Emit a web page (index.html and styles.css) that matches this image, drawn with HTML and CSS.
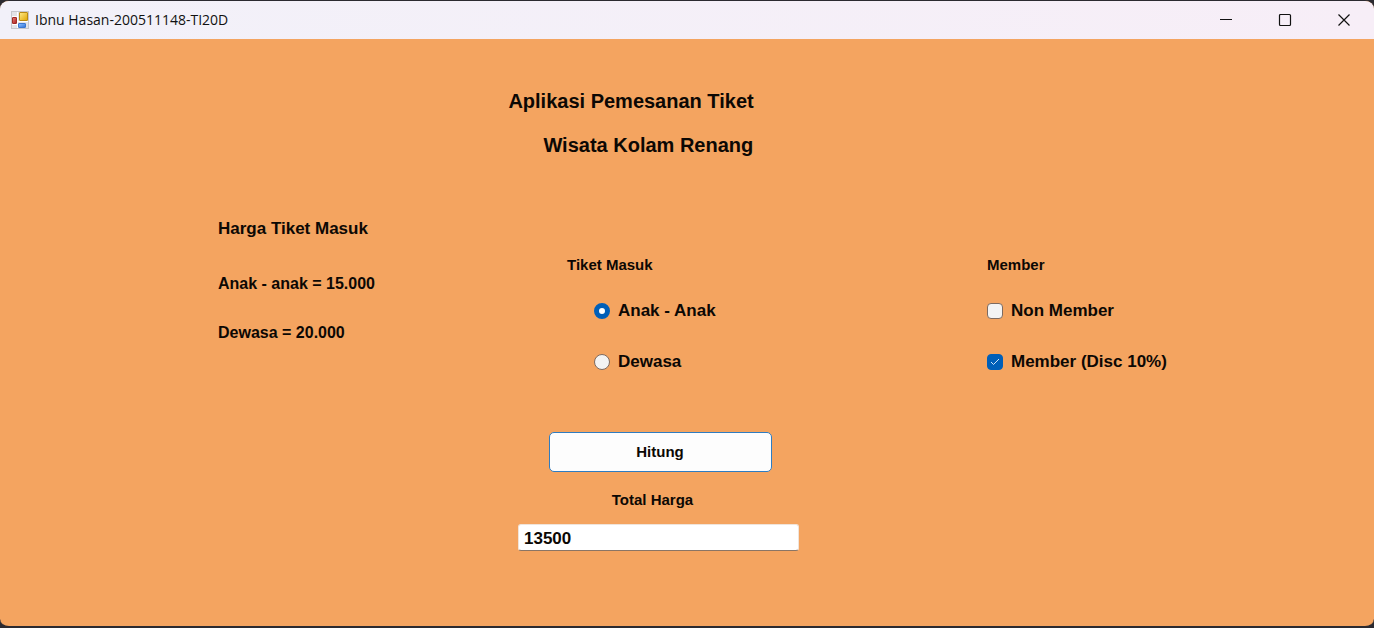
FILE: index.html
```html
<!DOCTYPE html>
<html lang="id">
<head>
<meta charset="utf-8">
<title>Ibnu Hasan-200511148-TI20D</title>
<link rel="stylesheet" href="styles.css">
</head>
<body>
<div class="window">
  <header class="titlebar">
    <svg class="app-icon" viewBox="0 0 18 18" aria-hidden="true">
      <defs>
        <linearGradient id="gold" x2="1" y2="1"><stop offset="0" stop-color="#ffeb8a"/><stop offset="1" stop-color="#e0a500"/></linearGradient>
        <linearGradient id="blue" x2="1" y2="1"><stop offset="0" stop-color="#8fc3ff"/><stop offset="1" stop-color="#2f6fd8"/></linearGradient>
        <linearGradient id="red" x2="1" y2="1"><stop offset="0" stop-color="#e8837a"/><stop offset="1" stop-color="#a81c1c"/></linearGradient>
      </defs>
      <rect x=".5" y=".5" width="17" height="17" fill="#e3e3e6" stroke="#c6c6cc"/>
      <path d="M6.500 1v16M1 5.500h6M1 13.500h6M7 10.500h10" stroke="#fff" fill="none"/>
      <rect x="8.500" y="1.500" width="8" height="8" rx=".4" fill="url(#gold)" stroke="#b98a12"/>
      <rect x="1.500" y="6.500" width="4" height="6" rx=".4" fill="url(#red)" stroke="#a32a25"/>
      <rect x="7.500" y="12.500" width="7" height="4" rx=".4" fill="url(#blue)" stroke="#3c78cf"/>
    </svg>
    <span class="caption">Ibnu Hasan-200511148-TI20D</span>
    <button class="caption-button" type="button" aria-label="Minimize">
      <svg viewBox="0 0 14 14"><path d="M1 6.500h12"/></svg>
    </button>
    <button class="caption-button" type="button" aria-label="Maximize">
      <svg viewBox="0 0 14 14"><rect x="1.500" y="1.500" width="11" height="11" rx="1"/></svg>
    </button>
    <button class="caption-button" type="button" aria-label="Close">
      <svg viewBox="0 0 14 14"><path d="M1.500 1.500l11 11M12.500 1.500l-11 11"/></svg>
    </button>
  </header>
  <main class="form">
    <h1 class="heading">
      <span>Aplikasi Pemesanan Tiket</span>
      <span class="heading-second">Wisata Kolam Renang</span>
    </h1>
    <div class="columns">
      <section class="prices">
        <h2 class="prices-title">Harga Tiket Masuk</h2>
        <p>Anak - anak = 15.000</p>
        <p>Dewasa = 20.000</p>
      </section>
      <fieldset class="group">
        <legend>Tiket Masuk</legend>
        <label class="option option-indent"><input type="radio" name="tiket" checked>Anak - Anak</label>
        <label class="option option-indent"><input type="radio" name="tiket">Dewasa</label>
      </fieldset>
      <fieldset class="group">
        <legend>Member</legend>
        <label class="option"><input type="checkbox">Non Member</label>
        <label class="option"><span class="check"><input type="checkbox" checked><svg viewBox="0 0 16 16" aria-hidden="true"><path d="M4 8l2.500 2.500 5.500-5.500"/></svg></span>Member (Disc 10%)</label>
      </fieldset>
    </div>
    <div class="result">
      <button class="calculate" type="button">Hitung</button>
      <label class="total-label" for="total">Total Harga</label>
      <input class="total" id="total" type="text" value="13500">
    </div>
  </main>
</div>
</body>
</html>
```
FILE: styles.css
```css
* {
  box-sizing: border-box;
}

body {
  margin: 0;
  background: #2b2a30;
  color: #0c0804;
  font: bold 15px/20px "Liberation Sans", Arial, sans-serif;
}

.window {
  display: flex;
  flex-direction: column;
  min-height: 100vh;
  border: solid #2b2a30;
  border-width: 1px 0 2px;
  border-radius: 9px;
  overflow: hidden;
  background: #f4a460;
}

.titlebar {
  display: flex;
  align-items: center;
  height: 38px;
  padding: 0 1px 0 11px;
  background: linear-gradient(90deg, #f2f1f9, #f7eef7);
}

.app-icon {
  width: 18px;
  height: 18px;
  margin-right: 6px;
}

.caption {
  flex: 1;
  color: #111;
  font: 14px/20px "Open Sans", "Noto Sans", sans-serif;
}

.caption-button {
  display: grid;
  place-items: center;
  width: 59px;
  height: 38px;
  padding: 0;
  border: 0;
  background: none;
}

.caption-button svg {
  width: 14px;
  height: 14px;
  fill: none;
  stroke: #111;
  stroke-width: 1.2;
}

.form {
  flex: 1;
  padding: 50px 0 40px;
}

.heading {
  display: flex;
  flex-direction: column;
  gap: 20px;
  margin: 0 0 62px;
  padding-left: 37%;
  font-size: 20px;
  line-height: 24px;
}

.heading-second {
  padding-left: 35px;
}

.columns {
  display: grid;
  grid-template-columns: 349fr 420fr 387fr;
  padding-left: 218px;
}

.prices-title {
  margin: 0 0 35px;
  font-size: 17px;
}

.prices p {
  margin: 0 0 29px;
  font-size: 16px;
}

.group {
  display: flex;
  flex-direction: column;
  gap: 31px;
  margin: 36px 0 0;
  padding: 26px 0 0;
  border: 0;
}

.group legend {
  padding: 0;
}

.option {
  display: flex;
  align-items: center;
  gap: 8px;
  font-size: 17px;
}

.option-indent {
  padding-left: 27px;
}

.option input {
  appearance: none;
  display: block;
  width: 16px;
  height: 16px;
  margin: 0;
  border: 1px solid #7d6a60;
  background: #f3f3f3;
}

.option input[type="radio"] {
  border-radius: 50%;
}

.option input[type="checkbox"] {
  border-radius: 4px;
}

.option input:checked {
  border-color: #005fb8;
  background: #005fb8;
}

.option input[type="radio"]:checked {
  border-width: 5px;
  background: #fff;
}

.check {
  display: grid;
}

.check > * {
  grid-area: 1 / 1;
}

.check svg {
  width: 16px;
  height: 16px;
  fill: none;
  stroke: #cfe3f6;
  pointer-events: none;
  z-index: 1;
}

.result {
  display: flex;
  flex-direction: column;
  align-items: center;
  width: 281px;
  margin: 60px 0 0 518px;
}

.calculate {
  width: 223px;
  height: 40px;
  margin-left: 3px;
  border: 1px solid #2f7cc0;
  border-radius: 5px;
  background: #fdfdfd;
  color: inherit;
  font: inherit;
}

.total-label {
  margin: 18px 12px 14px 0;
}

.total {
  width: 100%;
  height: 27px;
  padding: 2px 5px 0;
  border: 1px solid #f0e4da;
  border-bottom-color: #8a7565;
  border-radius: 3px;
  background: #fff;
  color: inherit;
  font: inherit;
  font-size: 17px;
}
```
